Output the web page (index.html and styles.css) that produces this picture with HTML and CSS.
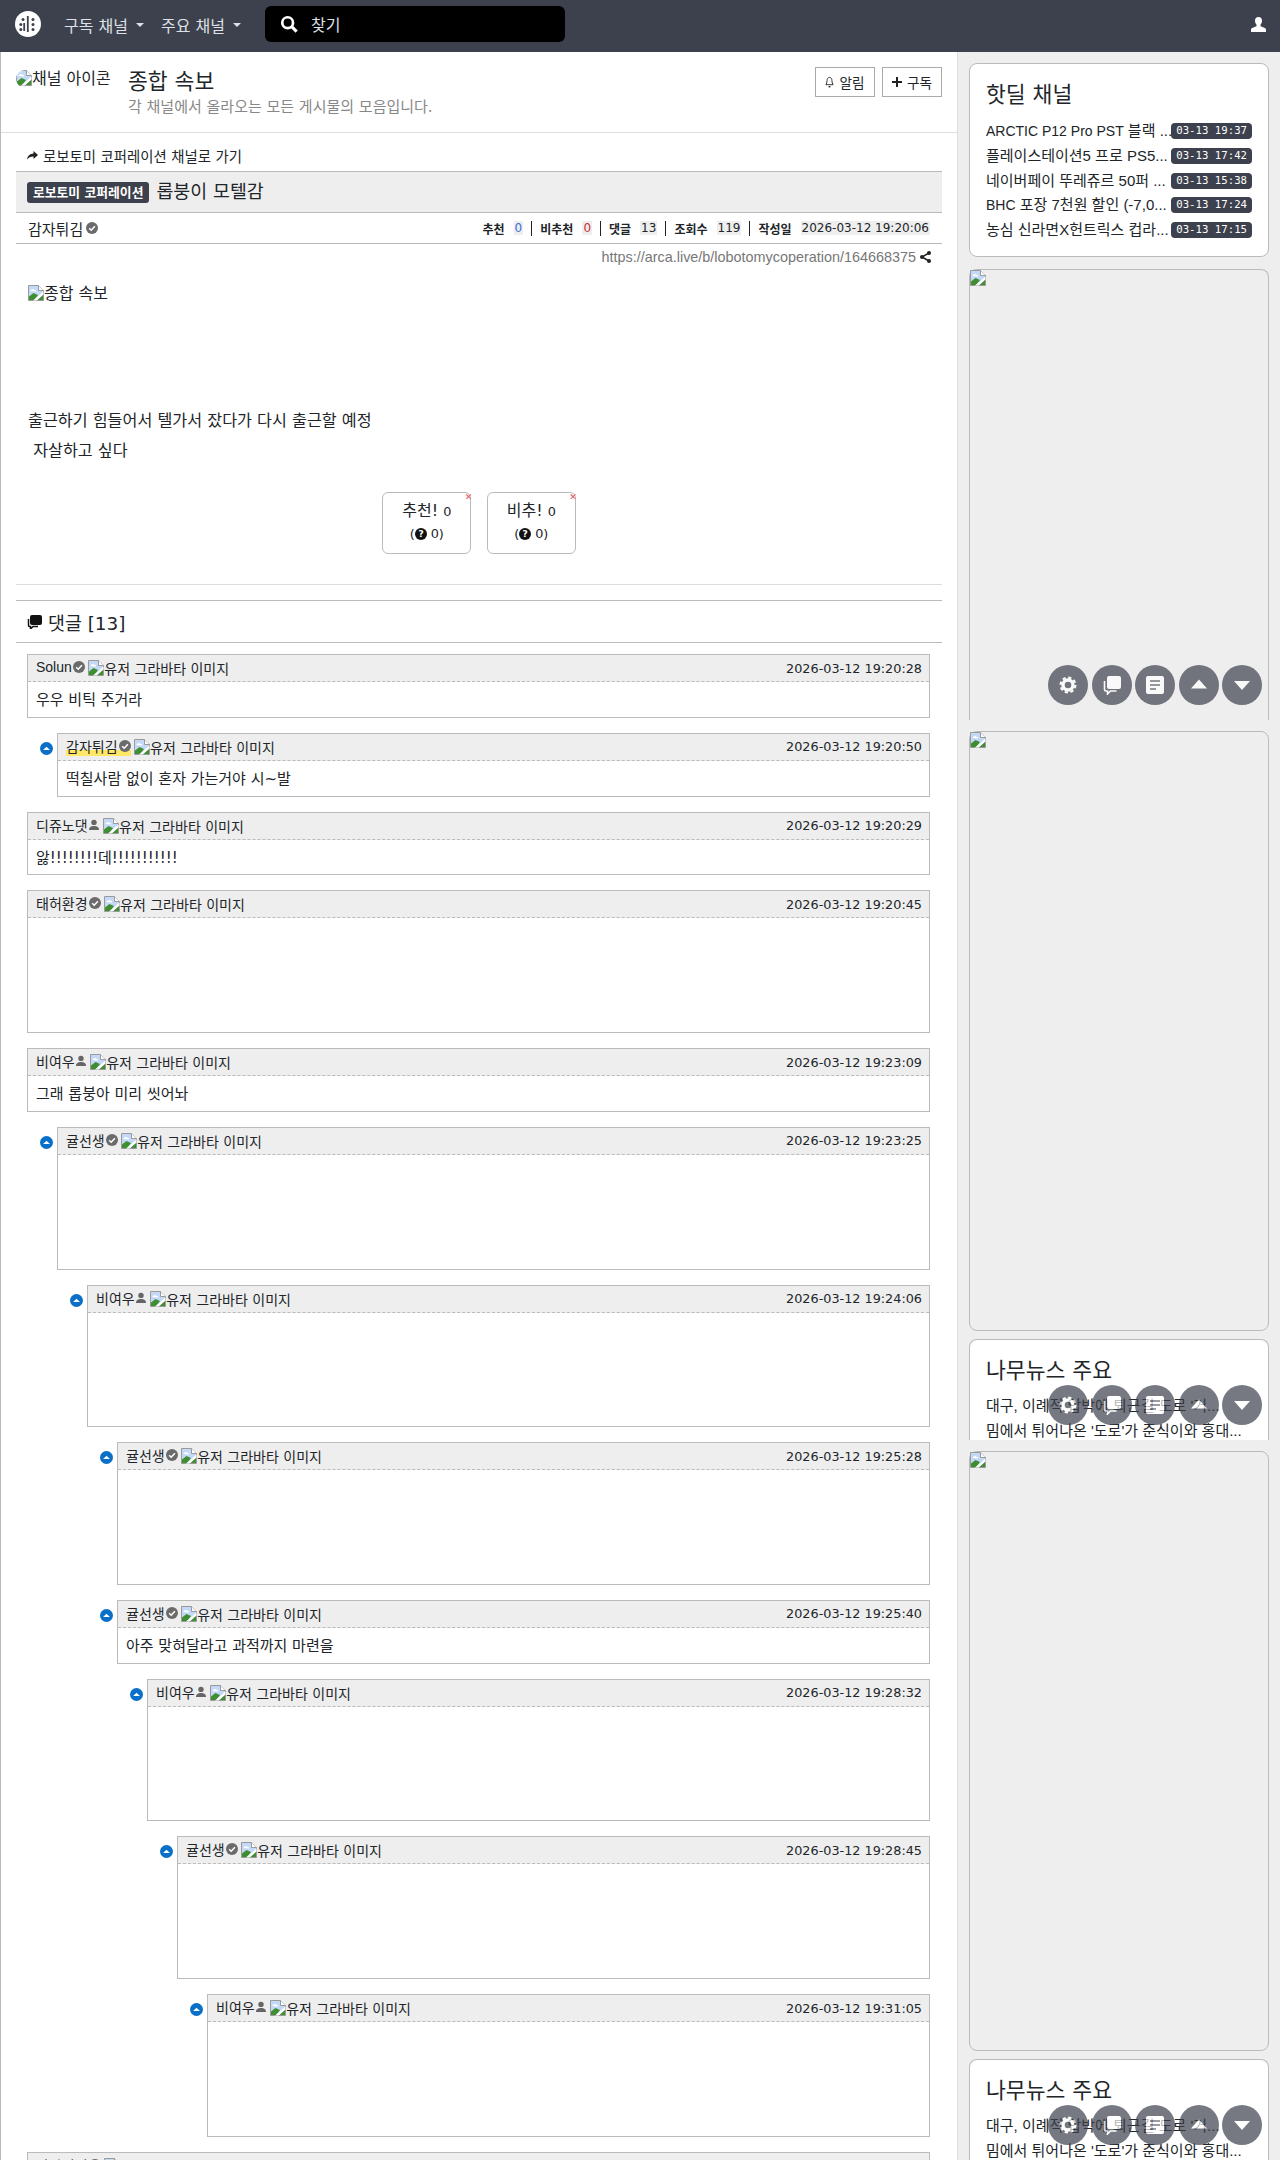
FILE: index.html
```html
<!DOCTYPE html>
<html lang="ko">
<head>
    <meta charset="UTF-8">
    <meta name="viewport" content="width=device-width, initial-scale=1.0">
    <title>롭붕이 모텔감 - 로보토미 코퍼레이션 채널</title>
    <link rel="stylesheet" href="styles.css">
</head>
<body>
    <!-- 아이콘 모음 -->
    <svg class="icon-defs" aria-hidden="true">
        <symbol id="i-broken" viewBox="0 0 16 16">
            <path d="M.5.5h10l5 5v10H.5z" fill="#c3d9f7" stroke="#9a9a9a"/>
            <path d="M10.500.5v5h5" fill="#fff" stroke="#9a9a9a"/>
            <path d="M2.500 6c0-1.500 2.500-2.200 3.800-1.200 1.500 0 2.200 1 1.700 1.700z" fill="#fff"/>
            <path d="M1 15v-3.500l4.500-3.500 4.500 2-3.500 5z" fill="#3f8f32"/>
            <path d="M15 9.500 9.500 15H15z" fill="#3f8f32"/>
            <path d="M15.500 6.500 5 15.500h3.500l7-6z" fill="#fff"/>
        </symbol>
        <symbol id="i-check" viewBox="0 0 12 12">
            <circle cx="6" cy="6" r="6" fill="#6b6b6b"/>
            <path d="M3.200 6.200 5.200 8.200 8.900 4.200" fill="none" stroke="#fff" stroke-width="1.500"/>
        </symbol>
        <symbol id="i-user" viewBox="0 0 12 12">
            <circle cx="6" cy="3.400" r="2.700" fill="#666"/>
            <path d="M1 11c0-3 2-4 5-4s5 1 5 4z" fill="#666"/>
        </symbol>
        <symbol id="i-up" viewBox="0 0 12 12">
            <circle cx="6" cy="6" r="6" fill="#0a6fc8"/>
            <path d="M2.800 7.400 6 4.400l3.200 3z" fill="#fff"/>
        </symbol>
    </svg>

    <nav class="topbar">
        <svg class="logo" viewBox="0 0 26 26">
            <circle cx="13" cy="13" r="13" fill="#fff"/>
            <path d="M12.800 5v16M9.200 12v8" stroke="#3d414d" stroke-width="1.800"/>
            <circle cx="8" cy="8.500" r="1.500" fill="#3d414d"/>
            <circle cx="5.800" cy="13.500" r="1.500" fill="#3d414d"/>
            <circle cx="5.800" cy="18.500" r="1.500" fill="#3d414d"/>
            <circle cx="18" cy="8.500" r="1.500" fill="#3d414d"/>
            <circle cx="18" cy="13.500" r="1.500" fill="#3d414d"/>
            <circle cx="18" cy="18.500" r="1.500" fill="#3d414d"/>
        </svg>
        <a class="nav-link">구독 채널</a>
        <a class="nav-link">주요 채널</a>
        <div class="search-box">
            <svg class="search-icon" viewBox="0 0 20 20">
                <circle cx="8.500" cy="8.500" r="6" fill="none" stroke="#fff" stroke-width="3"/>
                <path d="M13 13l5.500 5.500" stroke="#fff" stroke-width="3.500"/>
            </svg>
            <span>찾기</span>
        </div>
        <svg class="nav-user" viewBox="0 0 15 15">
            <path d="M7.500 0c2.300 0 3.500 1.700 3.500 3.800 0 1.500-.6 3-1.500 3.900v1.500c1.500.7 5.500 1.500 5.500 3.300V15H0v-2.500c0-1.800 4-2.600 5.500-3.300V7.700C4.600 6.800 4 5.300 4 3.800 4 1.700 5.200 0 7.500 0z" fill="#fff"/>
        </svg>
    </nav>

    <div class="layout">
        <main class="main">
            <div class="board-head">
                <div class="board-icon"><svg class="broken"><use href="#i-broken"/></svg>채널 아이콘</div>
                <div class="board-text">
                    <div class="board-title">종합 속보</div>
                    <div class="board-desc">각 채널에서 올라오는 모든 게시물의 모음입니다.</div>
                </div>
                <div class="board-btns">
                    <button class="line-btn">
                        <svg class="btn-bell" viewBox="0 0 10 13"><path d="M5 1.500c2 0 2.700 1.500 2.700 3.500 0 2 .6 3.500 1.300 4.500H1C1.700 8.500 2.300 7 2.300 5c0-2 .7-3.500 2.700-3.500z" fill="none" stroke="#222"/><path d="M4 11h2v1.500H4z" fill="#222"/></svg>
                        알림
                    </button>
                    <button class="line-btn">
                        <svg class="btn-plus" viewBox="0 0 10 10"><path d="M5 0v10M0 5h10" stroke="#222" stroke-width="2"/></svg>
                        구독
                    </button>
                </div>
            </div>

            <article class="article">
                <a class="back-link">
                    <svg class="back-icon" viewBox="0 0 11 9"><path d="M6.500 0 11 4 6.500 8V5.500C3.500 5.500 1.500 6.500 0 8.500.5 5 3 2.700 6.500 2.500z" fill="#222"/></svg>
                    로보토미 코퍼레이션 채널로 가기
                </a>
                <div class="title-bar">
                    <span class="cat-badge">로보토미 코퍼레이션</span>
                    <span class="post-title">롭붕이 모텔감</span>
                </div>
                <div class="info-row">
                    <span class="author">감자튀김<svg class="badge-ic"><use href="#i-check"/></svg></span>
                    <div class="stats">
                        <b>추천</b><span class="val blue">0</span><i class="sep"></i>
                        <b>비추천</b><span class="val red">0</span><i class="sep"></i>
                        <b>댓글</b><span class="val">13</span><i class="sep"></i>
                        <b>조회수</b><span class="val">119</span><i class="sep"></i>
                        <b>작성일</b><span class="val">2026-03-12 19:20:06</span>
                    </div>
                </div>
                <div class="url-row">
                    https://arca.live/b/lobotomycoperation/164668375
                    <svg class="share-ic" viewBox="0 0 11 12"><path d="M9 2 2 6l7 4" fill="none" stroke="#222" stroke-width="1.500"/><circle cx="9" cy="2" r="2" fill="#222"/><circle cx="2" cy="6" r="2" fill="#222"/><circle cx="9" cy="10" r="2" fill="#222"/></svg>
                </div>

                <div class="post-body">
                    <div class="post-img"><svg class="broken"><use href="#i-broken"/></svg>종합 속보</div>
                    <p class="post-line">출근하기 힘들어서 텔가서 잤다가 다시 출근할 예정</p>
                    <p class="post-line">&nbsp;자살하고 싶다</p>
                </div>

                <div class="votes">
                    <button class="vote-btn">
                        <span class="vote-x">✕</span>
                        <span class="vote-main">추천! <small>0</small></span>
                        <span class="vote-sub">(<svg class="coin" viewBox="0 0 12 12"><circle cx="6" cy="6" r="6" fill="#111"/><text x="6" y="9.200" text-anchor="middle">?</text></svg> 0)</span>
                    </button>
                    <button class="vote-btn">
                        <span class="vote-x">✕</span>
                        <span class="vote-main">비추! <small>0</small></span>
                        <span class="vote-sub">(<svg class="coin" viewBox="0 0 12 12"><circle cx="6" cy="6" r="6" fill="#111"/><text x="6" y="9.200" text-anchor="middle">?</text></svg> 0)</span>
                    </button>
                </div>
                <hr class="end-line">
            </article>

            <section class="comments">
                <h3 class="comments-title">
                    <svg class="comments-ic" viewBox="0 0 15 14">
                        <path d="M5 0h8a2 2 0 0 1 2 2v6a2 2 0 0 1-2 2H5a2 2 0 0 1-2-2V2a2 2 0 0 1 2-2z" fill="#111"/>
                        <path d="M1.500 4v6.500a1 1 0 0 0 1 1h1V14l2.500-2.500h5" fill="none" stroke="#111" stroke-width="1.500"/>
                    </svg>
                    댓글 [13]
                </h3>

                <div class="comment">
                    <div class="c-head"><span class="c-name">Solun<svg class="badge-ic"><use href="#i-check"/></svg></span><span class="c-ava"><svg class="broken"><use href="#i-broken"/></svg>유저 그라바타 이미지</span><time>2026-03-12 19:20:28</time></div>
                    <div class="c-text">우우 비틱 주거라</div>
                </div>
                <div class="comment lv1">
                    <svg class="reply-ic"><use href="#i-up"/></svg>
                    <div class="c-head"><span class="c-name op">감자튀김<svg class="badge-ic"><use href="#i-check"/></svg></span><span class="c-ava"><svg class="broken"><use href="#i-broken"/></svg>유저 그라바타 이미지</span><time>2026-03-12 19:20:50</time></div>
                    <div class="c-text">떡칠사람 없이 혼자 가는거야 시~발</div>
                </div>
                <div class="comment">
                    <div class="c-head"><span class="c-name">디쥬노댓<svg class="user-ic"><use href="#i-user"/></svg></span><span class="c-ava"><svg class="broken"><use href="#i-broken"/></svg>유저 그라바타 이미지</span><time>2026-03-12 19:20:29</time></div>
                    <div class="c-text">앓!!!!!!!!데!!!!!!!!!!!</div>
                </div>
                <div class="comment">
                    <div class="c-head"><span class="c-name">태허환경<svg class="badge-ic"><use href="#i-check"/></svg></span><span class="c-ava"><svg class="broken"><use href="#i-broken"/></svg>유저 그라바타 이미지</span><time>2026-03-12 19:20:45</time></div>
                    <div class="c-pic"></div>
                </div>
                <div class="comment">
                    <div class="c-head"><span class="c-name">비여우<svg class="user-ic"><use href="#i-user"/></svg></span><span class="c-ava"><svg class="broken"><use href="#i-broken"/></svg>유저 그라바타 이미지</span><time>2026-03-12 19:23:09</time></div>
                    <div class="c-text">그래 롭붕아 미리 씻어놔</div>
                </div>
                <div class="comment lv1">
                    <svg class="reply-ic"><use href="#i-up"/></svg>
                    <div class="c-head"><span class="c-name">귤선생<svg class="badge-ic"><use href="#i-check"/></svg></span><span class="c-ava"><svg class="broken"><use href="#i-broken"/></svg>유저 그라바타 이미지</span><time>2026-03-12 19:23:25</time></div>
                    <div class="c-pic"></div>
                </div>
                <div class="comment lv2">
                    <svg class="reply-ic"><use href="#i-up"/></svg>
                    <div class="c-head"><span class="c-name">비여우<svg class="user-ic"><use href="#i-user"/></svg></span><span class="c-ava"><svg class="broken"><use href="#i-broken"/></svg>유저 그라바타 이미지</span><time>2026-03-12 19:24:06</time></div>
                    <div class="c-pic"></div>
                </div>
                <div class="comment lv3">
                    <svg class="reply-ic"><use href="#i-up"/></svg>
                    <div class="c-head"><span class="c-name">귤선생<svg class="badge-ic"><use href="#i-check"/></svg></span><span class="c-ava"><svg class="broken"><use href="#i-broken"/></svg>유저 그라바타 이미지</span><time>2026-03-12 19:25:28</time></div>
                    <div class="c-pic"></div>
                </div>
                <div class="comment lv3">
                    <svg class="reply-ic"><use href="#i-up"/></svg>
                    <div class="c-head"><span class="c-name">귤선생<svg class="badge-ic"><use href="#i-check"/></svg></span><span class="c-ava"><svg class="broken"><use href="#i-broken"/></svg>유저 그라바타 이미지</span><time>2026-03-12 19:25:40</time></div>
                    <div class="c-text">아주 맞혀달라고 과적까지 마련을</div>
                </div>
                <div class="comment lv4">
                    <svg class="reply-ic"><use href="#i-up"/></svg>
                    <div class="c-head"><span class="c-name">비여우<svg class="user-ic"><use href="#i-user"/></svg></span><span class="c-ava"><svg class="broken"><use href="#i-broken"/></svg>유저 그라바타 이미지</span><time>2026-03-12 19:28:32</time></div>
                    <div class="c-pic"></div>
                </div>
                <div class="comment lv5">
                    <svg class="reply-ic"><use href="#i-up"/></svg>
                    <div class="c-head"><span class="c-name">귤선생<svg class="badge-ic"><use href="#i-check"/></svg></span><span class="c-ava"><svg class="broken"><use href="#i-broken"/></svg>유저 그라바타 이미지</span><time>2026-03-12 19:28:45</time></div>
                    <div class="c-pic"></div>
                </div>
                <div class="comment lv6">
                    <svg class="reply-ic"><use href="#i-up"/></svg>
                    <div class="c-head"><span class="c-name">비여우<svg class="user-ic"><use href="#i-user"/></svg></span><span class="c-ava"><svg class="broken"><use href="#i-broken"/></svg>유저 그라바타 이미지</span><time>2026-03-12 19:31:05</time></div>
                    <div class="c-pic"></div>
                </div>
                <div class="comment">
                    <div class="c-head"><span class="c-name">감자튀김<svg class="badge-ic"><use href="#i-check"/></svg></span><span class="c-ava"><svg class="broken"><use href="#i-broken"/></svg>유저 그라바타 이미지</span><time>2026-03-12 19:31:40</time></div>
                    <div class="c-pic"></div>
                </div>
            </section>
        </main>

        <aside class="side">
            <div class="side-card">
                <h4 class="side-title">핫딜 채널</h4>
                <ul class="deal-list">
                    <li><span class="deal-name"><span class="latin">ARCTIC P12 Pro PST</span> 블랙 ...</span><span class="deal-time">03-13 19:37</span></li>
                    <li><span class="deal-name">플레이스테이션5 프로 PS5...</span><span class="deal-time">03-13 17:42</span></li>
                    <li><span class="deal-name">네이버페이 뚜레쥬르 50퍼 ...</span><span class="deal-time">03-13 15:38</span></li>
                    <li><span class="deal-name"><span class="latin">BHC</span> 포장 7천원 할인 (-7,0...</span><span class="deal-time">03-13 17:24</span></li>
                    <li><span class="deal-name">농심 신라면X헌트릭스 컵라...</span><span class="deal-time">03-13 17:15</span></li>
                </ul>
            </div>

            <div class="ad-box first">
                <svg class="broken"><use href="#i-broken"/></svg>
                <div class="float-btns">
                    <button class="float-btn"><svg viewBox="0 0 20 20"><circle cx="10" cy="10" r="5" fill="none" stroke="#fff" stroke-width="3.400"/><circle cx="10" cy="10" r="7.400" fill="none" stroke="#fff" stroke-width="2.200" stroke-dasharray="3.200 2.610"/></svg></button>
                    <button class="float-btn"><svg viewBox="0 0 20 20"><path d="M7 1h10a2 2 0 0 1 2 2v9a2 2 0 0 1-2 2H7a2 2 0 0 1-2-2V3a2 2 0 0 1 2-2z" fill="#fff"/><path d="M2.500 6v8.500a1.500 1.500 0 0 0 1.500 1.500h1.500v3l3-3h6" fill="none" stroke="#fff" stroke-width="1.600"/></svg></button>
                    <button class="float-btn"><svg viewBox="0 0 20 20"><path d="M3 1h14a2 2 0 0 1 2 2v14a2 2 0 0 1-2 2H3a2 2 0 0 1-2-2V3a2 2 0 0 1 2-2z" fill="#fff"/><path d="M5 6h10M5 10h10M5 14h6" stroke="#72757d" stroke-width="2"/></svg></button>
                    <button class="float-btn"><svg viewBox="0 0 20 20"><path d="M10 4.500 18 13.500H2z" fill="#fff"/></svg></button>
                    <button class="float-btn"><svg viewBox="0 0 20 20"><path d="M10 15 2 6h16z" fill="#fff"/></svg></button>
                </div>
            </div>
            <div class="ad-box second">
                <svg class="broken"><use href="#i-broken"/></svg>
            </div>
            <div class="side-card news">
                <h4 class="side-title">나무뉴스 주요</h4>
                <ul class="news-list">
                    <li>대구, 이례적 압박에 퇴근길 도로 '거...</li>
                    <li>밈에서 튀어나온 '도로'가 준식이와 홍대...</li>
                </ul>
                <div class="float-btns">
                    <button class="float-btn"><svg viewBox="0 0 20 20"><circle cx="10" cy="10" r="5" fill="none" stroke="#fff" stroke-width="3.400"/><circle cx="10" cy="10" r="7.400" fill="none" stroke="#fff" stroke-width="2.200" stroke-dasharray="3.200 2.610"/></svg></button>
                    <button class="float-btn"><svg viewBox="0 0 20 20"><path d="M7 1h10a2 2 0 0 1 2 2v9a2 2 0 0 1-2 2H7a2 2 0 0 1-2-2V3a2 2 0 0 1 2-2z" fill="#fff"/><path d="M2.500 6v8.500a1.500 1.500 0 0 0 1.500 1.500h1.500v3l3-3h6" fill="none" stroke="#fff" stroke-width="1.600"/></svg></button>
                    <button class="float-btn"><svg viewBox="0 0 20 20"><path d="M3 1h14a2 2 0 0 1 2 2v14a2 2 0 0 1-2 2H3a2 2 0 0 1-2-2V3a2 2 0 0 1 2-2z" fill="#fff"/><path d="M5 6h10M5 10h10M5 14h6" stroke="#72757d" stroke-width="2"/></svg></button>
                    <button class="float-btn"><svg viewBox="0 0 20 20"><path d="M10 4.500 18 13.500H2z" fill="#fff"/></svg></button>
                    <button class="float-btn"><svg viewBox="0 0 20 20"><path d="M10 15 2 6h16z" fill="#fff"/></svg></button>
                </div>
            </div>
            <div class="ad-box third">
                <svg class="broken"><use href="#i-broken"/></svg>
            </div>
            <div class="side-card news">
                <h4 class="side-title">나무뉴스 주요</h4>
                <ul class="news-list">
                    <li>대구, 이례적 압박에 퇴근길 도로 '거...</li>
                    <li>밈에서 튀어나온 '도로'가 준식이와 홍대...</li>
                </ul>
                <div class="float-btns">
                    <button class="float-btn"><svg viewBox="0 0 20 20"><circle cx="10" cy="10" r="5" fill="none" stroke="#fff" stroke-width="3.400"/><circle cx="10" cy="10" r="7.400" fill="none" stroke="#fff" stroke-width="2.200" stroke-dasharray="3.200 2.610"/></svg></button>
                    <button class="float-btn"><svg viewBox="0 0 20 20"><path d="M7 1h10a2 2 0 0 1 2 2v9a2 2 0 0 1-2 2H7a2 2 0 0 1-2-2V3a2 2 0 0 1 2-2z" fill="#fff"/><path d="M2.500 6v8.500a1.500 1.500 0 0 0 1.500 1.500h1.500v3l3-3h6" fill="none" stroke="#fff" stroke-width="1.600"/></svg></button>
                    <button class="float-btn"><svg viewBox="0 0 20 20"><path d="M3 1h14a2 2 0 0 1 2 2v14a2 2 0 0 1-2 2H3a2 2 0 0 1-2-2V3a2 2 0 0 1 2-2z" fill="#fff"/><path d="M5 6h10M5 10h10M5 14h6" stroke="#72757d" stroke-width="2"/></svg></button>
                    <button class="float-btn"><svg viewBox="0 0 20 20"><path d="M10 4.500 18 13.500H2z" fill="#fff"/></svg></button>
                    <button class="float-btn"><svg viewBox="0 0 20 20"><path d="M10 15 2 6h16z" fill="#fff"/></svg></button>
                </div>
            </div>
        </aside>
    </div>
</body>
</html>
```

FILE: styles.css
```css
* {
    box-sizing: border-box;
}
html, body {
    margin: 0;
    height: 2160px;
    overflow: hidden;
}
body {
    background-color: #fff;
    color: #212529;
    font-family: "DejaVu Sans", "Noto Sans CJK KR", sans-serif;
    font-size: 16px;
}
.icon-defs {
    position: absolute;
    width: 0;
    height: 0;
}
.broken {
    display: inline-block;
    width: 16px;
    height: 16px;
    flex: none;
    vertical-align: -2px;
}

/* 상단 메뉴 */
.topbar {
    display: flex;
    align-items: center;
    height: 52px;
    padding-left: 15px;
    background-color: #3d414d;
}
.logo {
    width: 26px;
    height: 26px;
    margin-right: 23px;
    margin-top: -4px;
}
.nav-link {
    display: flex;
    align-items: center;
    color: #dfe1e6;
    font-size: 16px;
    margin-right: 17px;
    margin-top: -3px;
}
.nav-link::after {
    content: "";
    margin-left: 8px;
    border-top: 4px solid #dfe1e6;
    border-left: 4px solid transparent;
    border-right: 4px solid transparent;
}
.search-box {
    display: flex;
    align-items: center;
    width: 300px;
    height: 36px;
    margin-left: 7px;
    margin-top: -4px;
    padding-left: 15px;
    border-radius: 6px;
    background-color: #000;
    color: #dfe1e6;
    font-size: 16px;
}
.search-icon {
    width: 18px;
    height: 18px;
    margin-right: 13px;
}
.nav-user {
    width: 15px;
    height: 15px;
    margin-left: auto;
    margin-right: 14px;
    margin-top: -4px;
}

/* 레이아웃 */
.layout {
    display: grid;
    grid-template-columns: 958px 322px;
}
.main {
    padding-bottom: 20px;
    border-left: 1px solid #bbb;
    border-right: 1px solid #ddd;
    background-color: #fff;
}
.side {
    padding: 11px 11px 0;
    background-color: #eee;
}

/* 채널 헤더 */
.board-head {
    display: flex;
    height: 81px;
    padding: 15px 15px 0;
    border-bottom: 1px solid #ddd;
}
.board-icon {
    width: 95px;
    height: 18px;
    margin-top: 3px;
    margin-right: 17px;
    overflow: hidden;
    border-radius: 10px;
    font-size: 16px;
    line-height: 18px;
    white-space: nowrap;
}
.board-text {
    flex: 1;
    padding-top: 1px;
}
.board-title {
    font-size: 21.6px;
    line-height: 28px;
}
.board-desc {
    margin-top: -1px;
    color: #888;
    font-size: 15px;
}
.board-btns {
    display: flex;
    gap: 7px;
}
.line-btn {
    display: flex;
    align-items: center;
    justify-content: center;
    gap: 5px;
    height: 30px;
    width: 60px;
    border: 1px solid #aaa;
    background: #fff;
    color: #212529;
    font-family: inherit;
    font-size: 13.6px;
    padding: 0;
}
.btn-bell {
    width: 9px;
    height: 12px;
}
.btn-plus {
    width: 10px;
    height: 10px;
}

/* 게시글 */
.article {
    padding: 0 15px;
}
.back-link {
    display: flex;
    align-items: center;
    gap: 5px;
    height: 38px;
    padding: 6px 11px 0;
    font-size: 14.4px;
}
.back-icon {
    width: 11px;
    height: 9px;
}
.title-bar {
    display: flex;
    align-items: center;
    gap: 7px;
    height: 42px;
    padding-left: 11px;
    border-top: 1px solid #bbb;
    border-bottom: 1px solid #bbb;
    background-color: #eee;
}
.cat-badge {
    padding: 3px 6px;
    border-radius: 3px;
    background-color: #3d414d;
    color: #fff;
    font-size: 12.8px;
    font-weight: bold;
    line-height: 15px;
}
.post-title {
    margin-top: -4px;
    font-size: 18.4px;
}
.info-row {
    display: flex;
    align-items: center;
    justify-content: space-between;
    height: 31px;
    padding: 0 12px;
    border-bottom: 1px solid #bbb;
}
.author {
    display: flex;
    align-items: center;
    font-size: 15px;
}
.author .badge-ic {
    margin-left: 3px;
}
.badge-ic {
    width: 12px;
    height: 12px;
    margin-left: 1px;
}
.user-ic {
    width: 12px;
    height: 12px;
}
.stats {
    display: flex;
    align-items: center;
    font-size: 12px;
}
.stats b {
    margin-right: 9px;
}
.val {
    padding: 0 1px;
    background-color: #eee;
}
.blue {
    color: #3b6fd6;
}
.red {
    color: #c33;
}
.sep {
    width: 1px;
    height: 15px;
    margin: 0 8px;
    background-color: #222;
}
.url-row {
    display: flex;
    align-items: center;
    justify-content: flex-end;
    gap: 4px;
    height: 26px;
    padding-right: 11px;
    color: #777;
    font-family: "Liberation Sans", "Noto Sans CJK KR", sans-serif;
    font-size: 14.4px;
}
.share-ic {
    width: 11px;
    height: 12px;
}
.post-body {
    padding: 12px 12px 0;
}
.post-img {
    height: 127px;
    font-size: 16px;
    line-height: 24px;
}
.post-line {
    margin: 0 0 6px;
    font-size: 16.2px;
    line-height: 24px;
}
.votes {
    display: flex;
    justify-content: center;
    gap: 15.500px;
    margin-top: 29px;
}
.vote-btn {
    position: relative;
    display: flex;
    flex-direction: column;
    align-items: center;
    width: 89px;
    height: 62px;
    padding: 6px 0 0;
    border: 1px solid #bbb;
    border-radius: 6px;
    background: #fff;
    color: #212529;
    font-family: inherit;
}
.vote-main {
    font-size: 16px;
    line-height: 24px;
}
.vote-main small {
    font-size: 12.8px;
}
.vote-sub {
    margin-top: 1px;
    font-size: 12.8px;
    line-height: 18px;
}
.coin {
    width: 12px;
    height: 12px;
    vertical-align: -2px;
}
.coin text {
    fill: #fff;
    font-size: 9px;
    font-weight: bold;
}
.vote-x {
    position: absolute;
    top: -1px;
    right: -2px;
    color: #e05555;
    font-size: 9px;
    line-height: 10px;
}
.end-line {
    margin: 30px 0 0;
    border: 0;
    border-top: 1px solid #ddd;
}

/* 댓글 */
.comments {
    margin: 0 15px;
}
.comments-title {
    display: flex;
    align-items: center;
    gap: 6px;
    height: 43px;
    margin: 15px 0 11px;
    padding-left: 11px;
    border-top: 1px solid #bbb;
    border-bottom: 1px solid #bbb;
    font-size: 18.4px;
    font-weight: normal;
}
.comments-ic {
    width: 15px;
    height: 14px;
}
.comment {
    position: relative;
    margin: 0 12px 15px 11px;
    border: 1px solid #bbb;
}
.lv1 { margin-left: 41px; }
.lv2 { margin-left: 71px; }
.lv3 { margin-left: 101px; }
.lv4 { margin-left: 131px; }
.lv5 { margin-left: 161px; }
.lv6 { margin-left: 191px; }
.reply-ic {
    position: absolute;
    top: 8px;
    left: -18px;
    width: 13px;
    height: 13px;
}
.c-head {
    display: flex;
    align-items: center;
    height: 27px;
    padding: 0 7px 0 8px;
    border-bottom: 1px dashed #bbb;
    background-color: #eee;
    font-size: 14px;
}
.c-name {
    display: flex;
    align-items: center;
    margin-top: -2px;
    font-family: "Liberation Sans", "Noto Sans CJK KR", sans-serif;
}
.c-name.op {
    background: linear-gradient(transparent 72%, #ffe866 72%);
}
.c-ava {
    margin-left: 3.500px;
}
.c-head time {
    margin-left: auto;
    font-size: 12.8px;
}
.c-text {
    height: 34.800px;
    padding: 0 8px;
    font-size: 15px;
    line-height: 37px;
}
.c-pic {
    height: 113.700px;
}

/* 사이드바 */
.side-card {
    position: relative;
    margin-bottom: 12px;
    padding: 16px;
    border: 1px solid #bbb;
    border-radius: 8px;
    background-color: #fff;
    height: 194px;
}
.side-title {
    margin: 0 0 10px;
    font-size: 21.6px;
    font-weight: normal;
    line-height: 29px;
}
.deal-list,
.news-list {
    margin: 0;
    padding: 0;
    list-style: none;
    font-family: "Liberation Sans", "Noto Sans CJK KR", sans-serif;
}
.deal-list li {
    display: flex;
    align-items: center;
    height: 24.700px;
    font-size: 15px;
}
.latin {
    font-size: 14px;
}
.deal-name {
    flex: 1;
    min-width: 0;
    margin-top: -3px;
    white-space: nowrap;
}
.deal-time {
    flex: none;
    margin-left: 3px;
    padding: 0 5px;
    border-radius: 4px;
    background-color: #3d414d;
    color: #fff;
    font-family: "DejaVu Sans Mono", monospace;
    font-size: 10.700px;
    line-height: 16px;
}
.side-card.news {
    height: 101px;
    margin-bottom: 11px;
    overflow: hidden;
    border-bottom: 0;
    border-radius: 8px 8px 0 0;
}
.side-card.news .side-title {
    margin-bottom: 8px;
}
.news-list li {
    height: 25px;
    font-size: 15px;
    line-height: 25px;
    white-space: nowrap;
}
.ad-box {
    position: relative;
    margin-bottom: 11px;
    border: 1px solid #bbb;
    border-radius: 8px;
    background-color: #eee;
}
.ad-box .broken {
    display: block;
}
.ad-box.first {
    height: 451px;
    border-bottom: 0;
    border-radius: 8px 8px 0 0;
}
.ad-box.second {
    height: 600px;
    margin-bottom: 8px;
}
.ad-box.third {
    height: 600px;
    margin-bottom: 8px;
}
.float-btns {
    position: absolute;
    right: 6px;
    bottom: 15px;
    display: flex;
    gap: 3.500px;
}
.float-btn {
    display: flex;
    align-items: center;
    justify-content: center;
    width: 40px;
    height: 40px;
    padding: 0;
    border: 0;
    border-radius: 50%;
    background-color: #3d414d;
    opacity: 0.7;
}
.float-btn svg {
    width: 20px;
    height: 20px;
}
```
